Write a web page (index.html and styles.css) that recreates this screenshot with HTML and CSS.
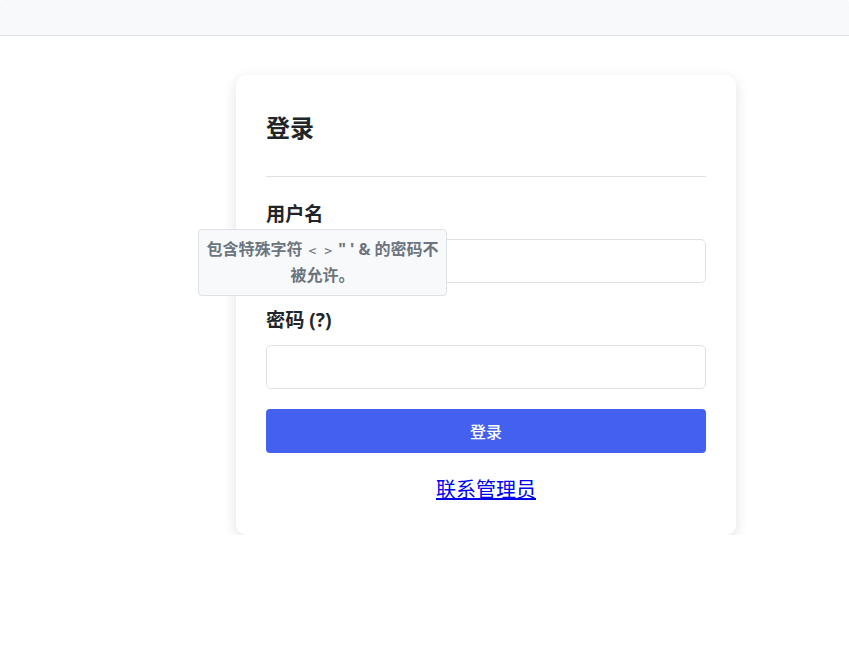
FILE: index.html
```
<!DOCTYPE html>
<html lang="zh">
<head>
    <meta charset="utf-8">
    <title>登录</title>
    <link rel="stylesheet" href="styles.css">
</head>
<body>

    <div class="topbar"></div>

    <div class="page">
        <div class="card">
            <h2 class="card-title">登录</h2>
            <div class="divider"></div>

            <div class="field">
                <label class="field-label" for="username">用户名</label>
                <input class="field-input" id="username" type="text">
                <div class="tip">包含特殊字符 <span class="sym">&lt; &gt;</span> " ' &amp; 的密码不<br>被允许。</div>
            </div>

            <div class="field field-last">
                <label class="field-label" for="password">密码 (?)</label>
                <input class="field-input" id="password" type="password">
            </div>

            <button class="btn-login">登录</button>

            <div class="contact">
                <a href="#">联系管理员</a>
            </div>
        </div>
    </div>

</body>
</html>
```

FILE: styles.css
```
body {
    margin: 0;
    background-color: #fff;
    font-family: "Noto Sans", "Noto Sans CJK SC", sans-serif;
    color: #212529;
}
.topbar {
    height: 35px;
    background-color: #f8f9fa;
    border-bottom: 1px solid #dee2e6;
    border-radius: 4px 4px 0 0;
}
.page {
    padding: 39px 0 0 236px;
}
.card {
    width: 500px;
    box-sizing: border-box;
    padding: 38px 30px 30px;
    background-color: #fff;
    border-radius: 10px;
    box-shadow: 0 4px 14px rgba(0, 0, 0, 0.12);
}
.card-title {
    margin: 0;
    font-size: 24px;
    line-height: 29px;
    font-weight: 700;
}
.divider {
    height: 1px;
    background-color: #dee2e6;
    margin: 34px 0 23px;
}
.field {
    position: relative;
    margin-bottom: 23px;
}
.field-last {
    margin-bottom: 20px;
}
.field-label {
    display: block;
    font-size: 19.2px;
    line-height: 27px;
    font-weight: 700;
    margin-bottom: 12px;
}
.field-input {
    display: block;
    width: 100%;
    height: 44px;
    box-sizing: border-box;
    border: 1px solid #dee2e6;
    border-radius: 5px;
    padding: 0 12px;
    font-size: 16px;
    font-family: inherit;
    background: #fff;
}
.tip {
    position: absolute;
    left: -68px;
    top: 29px;
    width: 249px;
    box-sizing: border-box;
    padding: 7px 0;
    background-color: #f8f9fa;
    border: 1px solid #dee2e6;
    border-radius: 4px;
    color: #6c757d;
    font-size: 16px;
    line-height: 25px;
    font-weight: 700;
    text-align: center;
    white-space: nowrap;
}
.sym {
    font-family: "DejaVu Sans Mono", monospace;
    font-weight: 400;
    font-size: 13px;
    margin: 0 2px;
}
.btn-login {
    display: block;
    width: 100%;
    height: 44px;
    border: none;
    border-radius: 4px;
    background-color: #4361ee;
    color: #fff;
    font-size: 16px;
    font-family: inherit;
    font-weight: 500;
    cursor: pointer;
}
.contact {
    margin-top: 22px;
    text-align: center;
    font-size: 20px;
    line-height: 30px;
}
.contact a {
    color: #0000ee;
}
```
